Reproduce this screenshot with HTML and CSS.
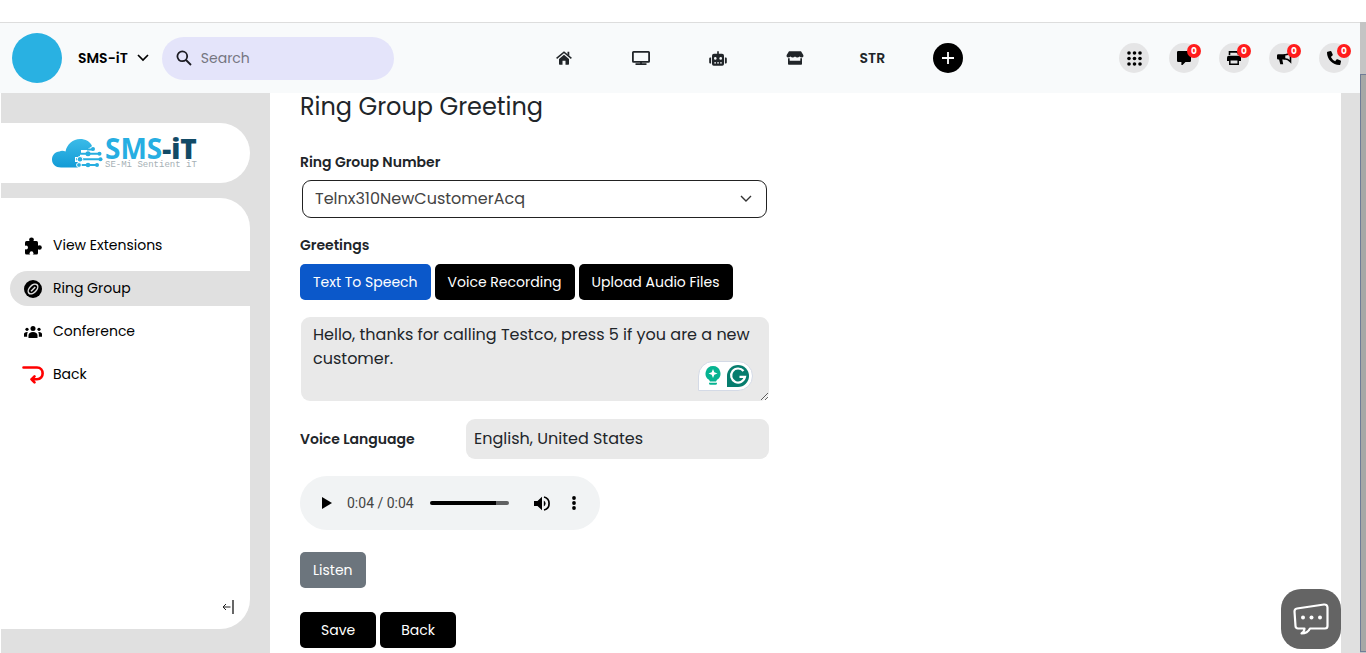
FILE: index.html
```html
<!DOCTYPE html>
<html lang="en">
<head>
<meta charset="utf-8">
<title>Ring Group Greeting</title>
<link rel="stylesheet" href="styles.css">
</head>
<body>
<div class="window">
  <div class="app">
    <header class="topbar">
      <div class="account">
        <span class="avatar"></span>
        <button class="account-btn" type="button">SMS-iT
          <svg width="12" height="8" viewBox="0 0 12 8" fill="none" stroke="#000" stroke-width="1.7"><path d="M1 1l5 5 5-5"/></svg>
        </button>
        <label class="search">
          <svg width="16" height="16" viewBox="0 0 16 16" fill="none" stroke="#1b1b22" stroke-width="1.8"><circle cx="6.3" cy="6.3" r="4.9"/><path d="M10 10l5 5"/></svg>
          <input type="search" placeholder="Search" aria-label="Search">
        </label>
      </div>
      <nav class="shortcuts">
        <a href="#" aria-label="Home"><svg width="16" height="14" viewBox="0 0 16 14" fill="#212529"><path d="M8 3.800l5 4.200v5a.7.7 0 0 1-.7.700H9.500V9.800h-3v3.900H3.700A.7.700 0 0 1 3 13V8z"/><path d="M.6 7.400L8 1.200l7.400 6.200" fill="none" stroke="#212529" stroke-width="1.500"/><path d="M11.500.800h1.800v4l-1.800-1.500z"/></svg></a>
        <a href="#" aria-label="Desktop"><svg width="18" height="14" viewBox="0 0 18 14" fill="none" stroke="#212529" stroke-width="1.800"><rect x=".9" y=".9" width="16.200" height="10" rx=".6"/><path d="M9 11v2M3.500 13.100h11"/></svg></a>
        <a href="#" aria-label="Bot"><svg width="18" height="15" viewBox="0 0 18 15"><path fill="#212529" d="M8.200.3h1.600v2.500H13a2 2 0 0 1 2 2V13a1.700 1.700 0 0 1-1.700 1.700H4.700A1.700 1.700 0 0 1 3 13V4.800a2 2 0 0 1 2-2h3.200zM.2 7.500a1 1 0 0 1 1-1h.9v6H1.200a1 1 0 0 1-1-1zM15.900 6.500h.9a1 1 0 0 1 1 1v4a1 1 0 0 1-1 1h-.9z"/><path fill="#f8fafb" d="M5.300 11.200h1.700v1.300H5.300zM8.200 11.200h1.700v1.300H8.200zM11.100 11.200h1.700v1.300h-1.700z"/><circle cx="6.300" cy="7.400" r="1.300" fill="#f8fafb"/><circle cx="11.700" cy="7.400" r="1.300" fill="#f8fafb"/></svg></a>
        <a href="#" aria-label="Store"><svg width="18" height="14" viewBox="0 0 18 14" fill="#212529"><path d="M3 .3h12l2.300 3.800c.5 1.300-.2 2.500-1.500 2.500-1 0-1.700-.4-2.300-1-1.100 1.300-3.200 1.300-4.500 0-1.300 1.300-3.400 1.300-4.500 0-.6.600-1.300 1-2.300 1C.9 6.600.2 5.400.700 4.100z"/><path d="M2 7.200h1.700v2.600h10.600V7.200H16V13a.8.8 0 0 1-.8.8H2.800A.8.8 0 0 1 2 13z"/></svg></a>
        <a href="#" class="nav-text">STR</a>
        <button class="add" type="button" aria-label="Add"><svg width="12" height="12" viewBox="0 0 12 12" stroke="#fff" stroke-width="1.800"><path d="M6 0v12M0 6h12"/></svg></button>
      </nav>
      <div class="tools">
        <button type="button" aria-label="Apps"><svg width="15" height="15" viewBox="0 0 15 15" fill="#000"><circle cx="2" cy="2" r="1.800"/><circle cx="7.500" cy="2" r="1.800"/><circle cx="13" cy="2" r="1.800"/><circle cx="2" cy="7.500" r="1.800"/><circle cx="7.500" cy="7.500" r="1.800"/><circle cx="13" cy="7.500" r="1.800"/><circle cx="2" cy="13" r="1.800"/><circle cx="7.500" cy="13" r="1.800"/><circle cx="13" cy="13" r="1.800"/></svg></button>
        <button type="button" aria-label="Messages"><svg width="14" height="14" viewBox="0 0 14 14"><path d="M1.200 0h11.600A1.200 1.200 0 0 1 14 1.200v8.600a1.200 1.200 0 0 1-1.200 1.200H8.500L5.500 14H4.400V11H1.200A1.200 1.200 0 0 1 0 9.800V1.200A1.200 1.200 0 0 1 1.200 0z"/></svg><span class="badge">0</span></button>
        <button type="button" aria-label="Fax"><svg width="14" height="14" viewBox="0 0 14 14"><path d="M2.500 4V.9h7.300L11.500 2.500V4" fill="none" stroke="#000" stroke-width="1.600"/><path d="M1.800 4.800h10.400A1.800 1.800 0 0 1 14 6.600V10H0V6.600a1.800 1.800 0 0 1 1.800-1.800z"/><path d="M2.800 8.800h8.400v4.400H2.800z" fill="#e5e5e6" stroke="#000" stroke-width="1.500"/></svg><span class="badge">0</span></button>
        <button type="button" aria-label="Campaigns"><svg width="15" height="14" viewBox="0 0 15 14"><path d="M1.200 3.300H8v5.200H5.300l.9 4.800H3.300l-1.200-4.800h-.9A1.200 1.200 0 0 1 0 7.300V4.500a1.200 1.200 0 0 1 1.200-1.200z"/><path d="M7.500 4c2.500 0 4.500-1 6-2.700v9.400c-1.500-1.700-3.500-2.900-6-2.900z" fill="#e5e5e6" stroke="#000" stroke-width="1.600"/></svg><span class="badge">0</span></button>
        <button type="button" aria-label="Calls"><svg width="14" height="14" viewBox="0 0 14 14"><path d="M.6.800L3.500.1c.4-.1.700.1.900.5l1.300 3c.1.400 0 .7-.3 1L3.900 5.900a9.500 9.500 0 0 0 4.300 4.300l1.300-1.600c.3-.3.700-.4 1-.3l3 1.300c.4.200.6.500.5.900l-.7 2.900c-.1.400-.4.600-.8.600C5.600 14 0 8.400 0 1.600 0 1.200.2.900.6.800z"/></svg><span class="badge">0</span></button>
      </div>
    </header>
    <div class="body">
      <aside class="sidebar">
        <div class="brand">
          <svg width="51" height="29" viewBox="0 0 51 29">
            <defs><linearGradient id="sky" x2="0" y2="1"><stop stop-color="#3bbbe8"/><stop offset="1" stop-color="#129bd6"/></linearGradient></defs>
            <path fill="url(#sky)" d="M9 28.500C3.500 28.500 0 25 0 20.500c0-4.300 3-7.500 7.500-8C9 11.500 12 11.800 13.500 12.500 15 5 21 0 28 0c5.500 0 10 2.300 12 7-1 1.500-3.500 1.500-5 4h-6v3h-1v4h-5v5h3v5.500z"/>
            <path fill="none" stroke="#27aee0" stroke-width="2" d="M28 14.800h19M24 20.300h25M24 26h21M35 10.500h6"/>
            <g fill="#27aee0"><circle cx="41" cy="10" r="2"/><circle cx="36" cy="14.800" r="2.500"/><circle cx="47.500" cy="14.800" r="2"/><circle cx="28" cy="20.300" r="2.800" stroke="#fff"/><circle cx="48.500" cy="20.300" r="2"/><circle cx="36" cy="26" r="2.300"/><circle cx="45" cy="26" r="2"/><circle cx="27" cy="26" r="2.400" stroke="#fff"/></g>
          </svg>
          <div class="brand-words">
            <span class="brand-name">SMS<b>-iT</b></span>
            <span class="brand-tag">SE-Mi Sentient iT</span>
          </div>
        </div>
        <nav class="menu">
          <a href="#"><span class="mi"><svg width="18" height="18" viewBox="0 0 18 18"><rect x="1" y="4" width="13" height="13.500" rx="1.500"/><circle cx="7.500" cy="2.800" r="2.400"/><path d="M6 3h3v3H6zM13 9h3v3h-3z"/><circle cx="15.500" cy="10.500" r="2.300"/><circle cx="2" cy="10.500" r="2" fill="#fff"/><circle cx="7.500" cy="16.200" r="1.900" fill="#fff"/><path d="M0 9.500h1.500v2H0zM6.600 16.500h1.800V18H6.600z" fill="#fff"/></svg></span>View Extensions</a>
          <a href="#" class="active"><span class="mi"><svg width="18" height="18" viewBox="0 0 18 18"><circle cx="9" cy="9" r="9"/><g transform="rotate(-45 9 9)" fill="none" stroke="#e0e0e0" stroke-width="1.500"><ellipse cx="9" cy="9" rx="5.800" ry="3.500"/><path d="M6 9.200h6"/></g></svg></span>Ring Group</a>
          <a href="#"><span class="mi"><svg width="18" height="12" viewBox="0 0 18 12"><circle cx="9" cy="2.500" r="2.500"/><circle cx="3" cy="3.300" r="1.600"/><circle cx="15" cy="3.300" r="1.600"/><path d="M4.500 12V9.300C4.500 7.300 6.200 6 9 6s4.500 1.300 4.500 3.300V12zM0 10.800V8.200c0-1.400 1.200-2.400 3.800-2.200C3.200 7 3 8.500 3.200 10.800zM18 10.800V8.200c0-1.400-1.200-2.400-3.800-2.200.6 1 .8 2.500.6 4.800z"/></svg></span>Conference</a>
          <a href="#"><span class="mi"><svg width="22" height="18" viewBox="0 0 22 18" fill="none" stroke="#f00" stroke-width="2.600" stroke-linecap="round" stroke-linejoin="round"><path d="M1.500 1.500h13.500c7.500 0 7.500 11.800 0 11.800H9.500M12.500 10.300l-3 3 3 3"/></svg></span>Back</a>
          <button class="collapse" type="button" aria-label="Collapse menu"><svg width="12" height="14" viewBox="0 0 12 14" fill="none" stroke="#222"><path d="M8.500 7H1M4 4L1 7l3 3"/><path d="M11 0v14" stroke="#000" stroke-width="1.200"/></svg></button>
        </nav>
      </aside>
      <main class="content">
        <h1>Ring Group Greeting</h1>
        <form class="form">
          <label class="label" for="number">Ring Group Number</label>
          <div class="select-wrap">
            <select id="number"><option>Telnx310NewCustomerAcq</option></select>
            <svg width="12" height="8" viewBox="0 0 12 8" fill="none" stroke="#333" stroke-width="1.400"><path d="M1 1l5 5 5-5"/></svg>
          </div>
          <label class="label" for="greeting">Greetings</label>
          <div class="buttons tabs">
            <button class="btn blue" type="button">Text To Speech</button>
            <button class="btn" type="button">Voice Recording</button>
            <button class="btn" type="button">Upload Audio Files</button>
          </div>
          <div class="text-wrap">
            <textarea id="greeting" spellcheck="false">Hello, thanks for calling Testco, press 5 if you are a new customer.</textarea>
            <div class="assistant">
              <svg width="16" height="20" viewBox="0 0 16 20"><path fill="#06b391" d="M8 0a7.500 7.500 0 0 1 4 13.800L11 15.500H5l-1-1.700A7.500 7.500 0 0 1 8 0zM4 16.700h8v.6a1.500 1.500 0 0 1-1.500 1.500h-5A1.500 1.500 0 0 1 4 17.300z"/><path fill="#fff" d="M8 3l1.300 3.200L12.500 7.500 9.300 8.800 8 12 6.700 8.800 3.500 7.500l3.200-1.300z"/></svg>
              <svg width="22" height="22" viewBox="0 0 22 22"><path fill="#067d6e" d="M11 0a11 11 0 1 1 0 22H0V11A11 11 0 0 1 11 0z"/><path d="M16.500 6A7 7 0 1 0 18 11.800H12.500" fill="none" stroke="#fff" stroke-width="2.200"/></svg>
            </div>
          </div>
          <div class="language">
            <label class="label" for="language">Voice Language</label>
            <input id="language" type="text" value="English, United States">
          </div>
          <div class="player">
            <button type="button" aria-label="Play"><svg width="10" height="12" viewBox="0 0 10 12"><path d="M0 0l10 6-10 6z"/></svg></button>
            <span class="time">0:04 / 0:04</span>
            <input class="track" type="range" min="0" max="100" value="83" aria-label="Position">
            <button class="volume" type="button" aria-label="Mute"><svg width="16" height="15" viewBox="0 0 16 15"><path d="M0 5h3.500L8 .800v13.400L3.500 10H0z"/><path d="M9.800 4.400a3.600 3.600 0 0 1 0 6.200z"/><path d="M10 1a6.700 6.700 0 0 1 0 13" fill="none" stroke="#000" stroke-width="1.700"/></svg></button>
            <button type="button" aria-label="More"><svg width="4" height="14" viewBox="0 0 4 14"><circle cx="2" cy="2" r="1.900"/><circle cx="2" cy="7" r="1.900"/><circle cx="2" cy="12" r="1.900"/></svg></button>
          </div>
          <div class="buttons"><button class="btn grey" type="button">Listen</button></div>
          <div class="buttons actions">
            <button class="btn wide" type="submit">Save</button>
            <button class="btn wide" type="button">Back</button>
          </div>
        </form>
      </main>
    </div>
  </div>
  <div class="scrollbar"><div class="thumb"></div></div>
</div>
<button class="chat" type="button" aria-label="Open chat"><svg width="38" height="34" viewBox="0 0 38 34" fill="none" stroke="#fff" stroke-width="2.200" stroke-linejoin="round"><path d="M5 6.500l27-4c2-.2 3.500 1 3.500 3v18.500c0 1.500-1 2.500-2.500 2.500H18c-1.500 3-4 5-8.500 5 2-1.500 3-3 3-5H6c-1.500 0-2.500-1-2.500-2.500L2.500 9.500c0-1.500 1-2.800 2.500-3z"/><g fill="#fff" stroke="none"><circle cx="11" cy="15.500" r="2"/><circle cx="19.500" cy="15.500" r="2"/><circle cx="28" cy="15.500" r="2"/></g></svg></button>
</body>
</html>
```
FILE: styles.css
```css
* { box-sizing: border-box; }
body { margin: 0; background: #fff; color: #212529; font-family: Poppins, Inter, "Open Sans", sans-serif; overflow: hidden; }
button, input, select, textarea { font: inherit; color: inherit; }
button { border: 0; padding: 0; background: none; cursor: pointer; }
a { color: inherit; text-decoration: none; }
svg { display: block; flex: none; }

.window { display: flex; min-height: 100vh; padding-top: 22px; }
.app { flex: 1; display: flex; flex-direction: column; min-width: 0; border-top: 1px solid #ddd; }
.scrollbar { width: 6px; padding-top: 52px; background: #c4c4c4; display: flex; }
.thumb { flex: 1; margin-bottom: 1px; background: #a6a8a6; border: 1px solid #6f7c96; border-right: 0; }

.topbar { display: flex; align-items: center; justify-content: space-between; height: 70px; padding: 0 11px 0 12px; background: #f8fafb; }
.account { display: flex; align-items: center; }
.avatar { width: 50px; height: 50px; border-radius: 50%; background: #29b1e2; }
.account-btn { display: flex; align-items: center; gap: 9px; margin: 0 13px 0 16px; font-size: 14px; font-weight: 600; color: #000; white-space: nowrap; }
.search { display: flex; align-items: center; gap: 7px; width: 232px; height: 43px; padding: 0 14px; border-radius: 22px; background: #e4e4fa; }
.search input { width: 100%; min-width: 0; border: 0; background: none; outline: 0; font-size: 14px; }
.search input::placeholder { color: #757580; opacity: 1; }
.shortcuts { display: flex; align-items: center; margin-right: 24px; }
.shortcuts a { display: flex; justify-content: center; width: 77px; }
.nav-text { font-size: 14px; font-weight: 600; }
.add { display: grid; place-items: center; width: 30px; height: 30px; margin-left: 22px; border-radius: 50%; background: #000; }
.tools { display: flex; justify-content: flex-end; gap: 20px; }
.tools button { position: relative; display: grid; place-items: center; width: 30px; height: 30px; border-radius: 50%; background: #e5e5e6; }
.badge { position: absolute; top: 1px; right: -2px; width: 14px; height: 14px; border-radius: 50%; background: #ff1c1c; color: #fff; font-size: 9px; line-height: 14px; font-weight: 700; text-align: center; }

.body { flex: 1; display: flex; margin-left: 1px; background: #e0e0e0; }
.sidebar { width: 269px; flex: none; padding: 30px 20px 24px 0; display: flex; flex-direction: column; gap: 15px; }
.brand { display: flex; align-items: center; gap: 2px; height: 60px; padding-left: 51px; background: #fff; border-radius: 0 30px 30px 0; }
.brand-words { display: flex; flex-direction: column; }
.brand-name { font: 700 28px/24px "Open Sans", sans-serif; color: #27aee2; }
.brand-name b { color: #124a66; }
.brand-tag { font: 9px/10px "Liberation Mono", monospace; color: #a5b0b5; }
.menu { flex: 1; display: flex; flex-direction: column; gap: 8px; padding: 30px 0 15px 9px; background: #fff; border-radius: 0 30px 30px 0; }
.menu a { display: flex; align-items: center; gap: 9px; height: 35px; padding-left: 12px; border-radius: 18px 0 0 18px; font-size: 14px; color: #000; }
.menu .active { background: #e0e0e0; }
.mi { display: flex; justify-content: center; width: 22px; }
.collapse { margin: auto 16px 0 auto; }

.content { flex: 1; margin-right: 19px; padding: 0 30px; background: #fff; height: 560px; }
h1 { margin: 0; font-size: 24px; line-height: 28px; font-weight: 400; }
.form { width: 469px; max-width: 100%; padding-top: 31px; }
.label { display: block; font-size: 14px; line-height: 20px; font-weight: 600; }
.select-wrap { position: relative; margin: 8px 2px 17px; }
.select-wrap svg { position: absolute; right: 15px; top: 15px; pointer-events: none; }
select { display: block; width: 100%; height: 38px; padding: 0 12px 2px; border: 1px solid #222; border-radius: 9px; background: #fff; appearance: none; font-size: 16px; color: #444; }
.buttons { display: flex; gap: 4px; }
.tabs { margin: 9px 0 17px; }
.btn { height: 36px; padding: 0 13px; border-radius: 5px; background: #000; color: #fff; font-size: 14px; font-weight: 400; white-space: nowrap; }
.blue { background: #0b58ca; }
.grey { background: #6c757d; }
.wide { padding: 0 21px; }
.text-wrap { position: relative; margin-left: 1px; }
textarea { display: block; width: 100%; height: 84px; padding: 6px 12px; border: 0; border-radius: 9px; background: #e9e9e9; outline: 0; font-size: 16px; line-height: 24px; resize: vertical; }
.assistant { position: absolute; right: 16px; bottom: 10px; display: flex; align-items: center; gap: 6px; padding: 3px 3px 3px 6px; border: 1px solid #d4dae6; border-radius: 15px 15px 15px 0; background: #fff; }
.language { display: flex; align-items: center; margin: 18px 0 17px; }
.language .label { flex: 1; }
.language input { width: 303px; height: 40px; padding: 0 8px 2px; border: 0; border-radius: 9px; background: #e9e9e9; font-size: 16px; }
.player { display: flex; align-items: center; width: 300px; height: 54px; margin-bottom: 22px; padding: 0 24px 0 22px; border-radius: 27px; background: #f1f3f4; }
.time { margin: 0 16px 0 15px; font: 14px/20px Roboto, sans-serif; color: #444; white-space: nowrap; }
.track { flex: 1; min-width: 0; height: 4px; margin: 0 25px 0 0; border-radius: 2px; appearance: none; background: linear-gradient(to right, #000 83%, #606162 83%); }
.track::-webkit-slider-thumb { appearance: none; width: 1px; height: 4px; }
.volume { margin-right: 22px; }
.actions { margin-top: 24px; }

.chat { position: fixed; right: 25px; bottom: 4px; display: grid; place-items: center; width: 60px; height: 60px; border-radius: 20px; background: #646464; }
```
